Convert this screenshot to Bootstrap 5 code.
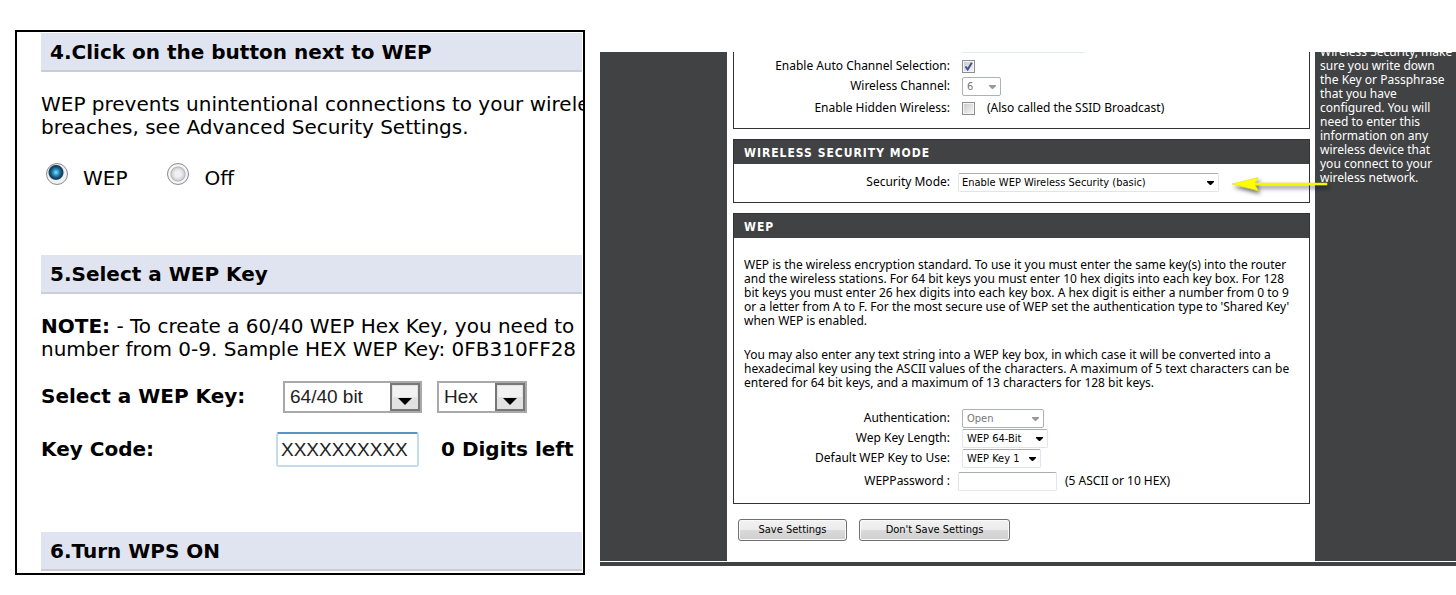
<!DOCTYPE html>
<html lang="en">
<head>
<meta charset="utf-8">
<meta name="viewport" content="width=device-width, initial-scale=1">
<title>Wireless security settings</title>
<link href="https://cdn.jsdelivr.net/npm/bootstrap@5.3.0/dist/css/bootstrap.min.css" rel="stylesheet">
<style>
  body { background: #fff; color: #000; }
  .page-pair { gap: 15px; padding-left: 15px; }

  .guide-panel {
    flex: 570 1 570px;
    min-width: 0;
    margin-top: 30px;
    border: 2px solid #000;
    padding: 1px 1px 2px 24px;
    font: 20px/23px "DejaVu Sans", Verdana, sans-serif;
    white-space: nowrap;
  }
  .guide-head {
    height: 39px;
    padding-left: 9px;
    background: #e0e4f0;
    border-bottom: 2px solid #cbccd6;
    font: bold 20px/38px "DejaVu Sans", Verdana, sans-serif;
  }
  .guide-text { margin: 21px 0 0; }
  .guide-options { height: 28px; margin: 24px 0 64px 5px; }
  .guide-options label { padding: 4px 40px 0 15px; }
  .guide-radio {
    appearance: none;
    width: 22px;
    height: 22px;
    margin: 0;
    border: 1px solid #8b8c90;
    border-radius: 50%;
    background: radial-gradient(circle, #f0f0f0 0 3px, #d4d4d6 6px, #b4b6b9 7px, #f4f4f4 8px);
  }
  .guide-radio:checked {
    background: radial-gradient(circle at 45% 42%, #8fe0fa 0, #2a90c4 3px, #10405f 6px, #24475e 7px, #f0f1f2 8px);
  }
  .guide-row { gap: 15px; height: 35px; margin-top: 18px; }
  .guide-label { width: 227px; font-weight: bold; }
  .guide-row-code { gap: 22px; margin-bottom: 65px; }
  .guide-row-code .guide-label { width: 213px; }
  .guide-control { font: 19px/28px "Liberation Sans", Arial, sans-serif; color: #222; }
  .guide-select {
    appearance: none;
    height: 32px;
    padding: 0 32px 0 5px;
    border: 2px solid #a9a9a9;
    border-radius: 0;
    background: #fff url("data:image/svg+xml,%3Csvg xmlns='http://www.w3.org/2000/svg' width='30' height='28'%3E%3Crect x='1' y='1' width='28' height='26' fill='%23e2e2e2' stroke='%23777' stroke-width='2'/%3E%3Crect x='3' y='3' width='24' height='11' fill='%23f2f2f2'/%3E%3Cpath d='M8 15h14l-7 7z'/%3E%3C/svg%3E") right 0 center no-repeat;
  }
  .select-size { width: 139px; }
  .select-format { width: 90px; }
  .guide-input {
    width: 143px;
    height: 35px;
    padding: 0 3px;
    border: 2px solid #c4dcea;
    border-top-color: #5794bf;
    border-radius: 3px;
  }

  .router {
    flex: 856 1 856px;
    min-width: 0;
    margin-top: 52px;
    font: 12px/14px "Noto Sans", Tahoma, sans-serif;
  }
  .router-left { flex: 127 1 127px; background: #414243; }
  .router-main { flex: 588 1 588px; min-width: 0; padding: 0 5px 20px 6px; }
  .router-help { flex: 141 1 141px; min-width: 0; padding: 0 0 0 5px; background: #414243; color: #fff; }
  .router-help p { margin: -7px 0 0; white-space: nowrap; }
  .router-foot { height: 4px; margin-top: 1px; background: #414243; }

  .router-box { border: 1px solid #333; margin-bottom: 10px; padding-bottom: 10px; position: relative; }
  .router-box h2 {
    height: 24px;
    margin: 0;
    padding-left: 10px;
    background: #414243;
    color: #fff;
    font: bold 12px/26px "DejaVu Sans Condensed", Tahoma, sans-serif;
    letter-spacing: 1px;
  }
  .router-box p { margin: 20px 10px 18px; }
  .router-row { height: 20px; gap: 12px; }
  .router-label { width: 216px; text-align: right; flex: none; }
  .row-first { margin-top: 3px; }
  .row-hidden { margin-top: 2px; }
  .row-mode { margin-top: 8px; gap: 8px; }
  .row-password { margin: 3px 0 2px; gap: 8px; }
  .router-select {
    appearance: none;
    height: 19px;
    padding: 0 4px;
    border: 1px solid #dfe4ee;
    border-top-color: #abadb3;
    border-radius: 2px;
    color: #000;
    font: 11px/15px "DejaVu Sans Condensed", Tahoma, sans-serif;
    background: #fff url("data:image/svg+xml,%3Csvg xmlns='http://www.w3.org/2000/svg' width='7' height='4'%3E%3Cpath d='M0 0h7v1L4 4H3L0 1z'/%3E%3C/svg%3E") right 4px top 7px no-repeat;
  }
  .router-select:disabled {
    border-color: #adb2b5;
    color: #777;
    opacity: 1;
    background-image: url("data:image/svg+xml,%3Csvg xmlns='http://www.w3.org/2000/svg' width='7' height='4'%3E%3Cpath fill='%23999' d='M0 0h7v1L4 4H3L0 1z'/%3E%3C/svg%3E");
  }
  .select-channel { width: 39px; }
  .select-mode { width: 261px; padding-left: 3px; }
  .select-auth { width: 82px; }
  .select-length { width: 86px; }
  .select-key { width: 79px; }
  .router-check {
    appearance: none;
    width: 13px;
    height: 13px;
    margin: 0;
    border: 1px solid #8e8f8f;
    box-shadow: inset 0 0 0 1px #f4f4f4;
    background: linear-gradient(135deg, #c6cacf, #f6f6f6);
  }
  .router-check:checked {
    background: url("data:image/svg+xml,%3Csvg xmlns='http://www.w3.org/2000/svg' width='11' height='11'%3E%3Cpath d='M2.5 5.5l2.2 3L8.8 1.8' fill='none' stroke='%23405090' stroke-width='2'/%3E%3C/svg%3E"), linear-gradient(135deg, #c6cacf, #f6f6f6);
  }
  .router-input {
    width: 99px;
    height: 19px;
    padding: 0 3px;
    border: 1px solid #dfe4ee;
    border-top-color: #abadb3;
    border-radius: 2px;
  }
  .ssid-edge { width: 123px; height: 1px; margin-left: 228px; background: #e3e9ef; }
  .router-actions { gap: 12px; margin: 15px 0 0 5px; }
  .router-btn {
    height: 22px;
    padding: 0;
    border: 1px solid #707070;
    border-radius: 3px;
    box-shadow: inset 0 0 0 1px #fafafa;
    background: linear-gradient(#f2f2f2 0, #ebebeb 50%, #dadada 50%, #cfcfcf);
    color: #000;
    font: 11px/18px "DejaVu Sans Condensed", Tahoma, sans-serif;
  }
  .btn-save { width: 109px; }
  .btn-discard { width: 151px; }
  .pointer-arrow { position: absolute; right: -26px; top: 32px; z-index: 2; }
</style>
</head>
<body>
<main class="page-pair d-flex align-items-start">

  <section class="guide-panel overflow-hidden">
    <h2 class="guide-head m-0">4.Click on the button next to WEP</h2>
    <p class="guide-text">WEP prevents unintentional connections to your wireless<br>breaches, see Advanced Security Settings.</p>
    <div class="guide-options d-flex">
      <input class="guide-radio" type="radio" name="wep" id="wep-on" checked><label for="wep-on">WEP</label>
      <input class="guide-radio" type="radio" name="wep" id="wep-off"><label for="wep-off">Off</label>
    </div>
    <h2 class="guide-head m-0">5.Select a WEP Key</h2>
    <p class="guide-text"><b>NOTE:</b> - To create a 60/40 WEP Hex Key, you need to<br>number from 0-9. Sample HEX WEP Key: 0FB310FF28</p>
    <div class="guide-row d-flex align-items-center">
      <label class="guide-label" for="key-size">Select a WEP Key:</label>
      <select class="guide-control guide-select select-size" id="key-size"><option>64/40 bit</option></select>
      <select class="guide-control guide-select select-format" aria-label="Key format"><option>Hex</option></select>
    </div>
    <div class="guide-row guide-row-code d-flex align-items-center">
      <label class="guide-label" for="key-code">Key Code:</label>
      <input class="guide-control guide-input" id="key-code" type="text" value="XXXXXXXXXX">
      <b>0 Digits left</b>
    </div>
    <h2 class="guide-head m-0">6.Turn WPS ON</h2>
  </section>

  <section class="router">
    <div class="d-flex overflow-hidden">
      <div class="router-left"></div>
      <div class="router-main">
        <div class="router-box border-top-0">
          <div class="ssid-edge"></div>
          <div class="router-row row-first d-flex align-items-center">
            <label class="router-label" for="auto-channel">Enable Auto Channel Selection:</label>
            <input class="router-check" type="checkbox" id="auto-channel" checked>
          </div>
          <div class="router-row d-flex align-items-center">
            <label class="router-label" for="channel">Wireless Channel:</label>
            <select class="router-select select-channel" id="channel" disabled><option>6</option></select>
          </div>
          <div class="router-row row-hidden d-flex align-items-center">
            <label class="router-label" for="hidden-ssid">Enable Hidden Wireless:</label>
            <input class="router-check" type="checkbox" id="hidden-ssid">
            <span>(Also called the SSID Broadcast)</span>
          </div>
        </div>

        <div class="router-box">
          <h2>WIRELESS SECURITY MODE</h2>
          <div class="router-row row-mode d-flex align-items-center">
            <label class="router-label" for="mode">Security Mode:</label>
            <select class="router-select select-mode" id="mode"><option>Enable WEP Wireless Security (basic)</option></select>
          </div>
          <svg class="pointer-arrow" width="108" height="28" viewBox="0 0 108 28" aria-hidden="true">
            <defs><filter id="soft" x="-10%" y="-50%" width="120%" height="200%"><feDropShadow dx="2" dy="3" stdDeviation="2" flood-color="#000" flood-opacity=".6"/></filter></defs>
            <path filter="url(#soft)" d="M5 12 31 5.500 28 11H100V13H28L31 18.500Z" fill="#ff0" stroke="#d8d800" stroke-width=".5"/>
          </svg>
        </div>

        <div class="router-box">
          <h2>WEP</h2>
          <p>WEP is the wireless encryption standard. To use it you must enter the same key(s) into the router and the wireless stations. For 64 bit keys you must enter 10 hex digits into each key box. For 128 bit keys you must enter 26 hex digits into each key box. A hex digit is either a number from 0 to 9 or a letter from A to F. For the most secure use of WEP set the authentication type to 'Shared Key' when WEP is enabled.</p>
          <p>You may also enter any text string into a WEP key box, in which case it will be converted into a hexadecimal key using the ASCII values of the characters. A maximum of 5 text characters can be entered for 64 bit keys, and a maximum of 13 characters for 128 bit keys.</p>
          <div class="router-row d-flex align-items-center">
            <label class="router-label" for="auth">Authentication:</label>
            <select class="router-select select-auth" id="auth" disabled><option>Open</option></select>
          </div>
          <div class="router-row d-flex align-items-center">
            <label class="router-label" for="length">Wep Key Length:</label>
            <select class="router-select select-length" id="length"><option>WEP 64-Bit</option></select>
          </div>
          <div class="router-row d-flex align-items-center">
            <label class="router-label" for="default-key">Default WEP Key to Use:</label>
            <select class="router-select select-key" id="default-key"><option>WEP Key 1</option></select>
          </div>
          <div class="router-row row-password d-flex align-items-center">
            <label class="router-label" for="password">WEPPassword :</label>
            <input class="router-input" type="password" id="password">
            <span>(5 ASCII or 10 HEX)</span>
          </div>
        </div>

        <div class="d-flex router-actions">
          <button class="router-btn btn-save" type="button">Save Settings</button>
          <button class="router-btn btn-discard" type="button">Don't Save Settings</button>
        </div>
      </div>
      <aside class="router-help overflow-hidden">
        <p>Wireless Security, make<br>sure you write down<br>the Key or Passphrase<br>that you have<br>configured. You will<br>need to enter this<br>information on any<br>wireless device that<br>you connect to your<br>wireless network.</p>
      </aside>
    </div>
    <div class="router-foot"></div>
  </section>
</main>
<script src="https://cdn.jsdelivr.net/npm/bootstrap@5.3.0/dist/js/bootstrap.bundle.min.js"></script>
</body>
</html>
